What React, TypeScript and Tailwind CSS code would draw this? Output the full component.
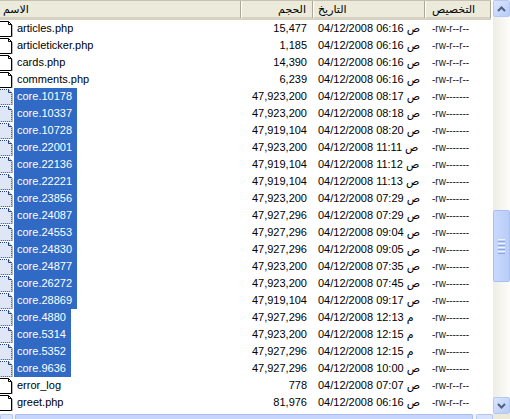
import React from "react";

type Row = { name: string; size: string; time: string; ampm: string; perm: string; sel?: boolean };

const rows: Row[] = [
  { name: "articles.php", size: "15,477", time: "06:16", ampm: "ص", perm: "-rw-r--r--" },
  { name: "articleticker.php", size: "1,185", time: "06:16", ampm: "ص", perm: "-rw-r--r--" },
  { name: "cards.php", size: "14,390", time: "06:16", ampm: "ص", perm: "-rw-r--r--" },
  { name: "comments.php", size: "6,239", time: "06:16", ampm: "ص", perm: "-rw-r--r--" },
  { name: "core.10178", size: "47,923,200", time: "08:17", ampm: "ص", perm: "-rw-------", sel: true },
  { name: "core.10337", size: "47,923,200", time: "08:18", ampm: "ص", perm: "-rw-------", sel: true },
  { name: "core.10728", size: "47,919,104", time: "08:20", ampm: "ص", perm: "-rw-------", sel: true },
  { name: "core.22001", size: "47,923,200", time: "11:11", ampm: "ص", perm: "-rw-------", sel: true },
  { name: "core.22136", size: "47,919,104", time: "11:12", ampm: "ص", perm: "-rw-------", sel: true },
  { name: "core.22221", size: "47,919,104", time: "11:13", ampm: "ص", perm: "-rw-------", sel: true },
  { name: "core.23856", size: "47,923,200", time: "07:29", ampm: "ص", perm: "-rw-------", sel: true },
  { name: "core.24087", size: "47,927,296", time: "07:29", ampm: "ص", perm: "-rw-------", sel: true },
  { name: "core.24553", size: "47,927,296", time: "09:04", ampm: "ص", perm: "-rw-------", sel: true },
  { name: "core.24830", size: "47,927,296", time: "09:05", ampm: "ص", perm: "-rw-------", sel: true },
  { name: "core.24877", size: "47,923,200", time: "07:35", ampm: "ص", perm: "-rw-------", sel: true },
  { name: "core.26272", size: "47,923,200", time: "07:45", ampm: "ص", perm: "-rw-------", sel: true },
  { name: "core.28869", size: "47,919,104", time: "09:17", ampm: "ص", perm: "-rw-------", sel: true },
  { name: "core.4880", size: "47,927,296", time: "12:13", ampm: "م", perm: "-rw-------", sel: true },
  { name: "core.5314", size: "47,923,200", time: "12:15", ampm: "م", perm: "-rw-------", sel: true },
  { name: "core.5352", size: "47,927,296", time: "12:15", ampm: "م", perm: "-rw-------", sel: true },
  { name: "core.9636", size: "47,927,296", time: "10:00", ampm: "ص", perm: "-rw-------", sel: true },
  { name: "error_log", size: "778", time: "07:07", ampm: "ص", perm: "-rw-r--r--" },
  { name: "greet.php", size: "81,976", time: "06:16", ampm: "ص", perm: "-rw-r--r--" },
];

function FileIcon({ sel }: { sel?: boolean }) {
  return (
    <svg width="13" height="16" viewBox="0 0 13 16" className="shrink-0">
      <path
        d="M-2 0.5 H8.5 L11.5 3.5 V15.5 H-2 Z"
        fill={sel ? "#dfe7f7" : "#ffffff"}
        stroke={sel ? "#1c3f8f" : "#000000"}
        strokeWidth="1"
        strokeDasharray={sel ? "1 1" : undefined}
      />
      <path d="M8.5 0.5 V3.5 H11.5" fill="none" stroke={sel ? "#1c3f8f" : "#000000"} strokeWidth="1" />
      <path d="M12.5 4 V16" stroke="#b8b8b8" strokeWidth="1" />
    </svg>
  );
}

function Arrow({ up }: { up?: boolean }) {
  return (
    <svg width="9" height="6" viewBox="0 0 9 6">
      <path
        d={up ? "M1 5 L4.5 1.5 L8 5" : "M1 1 L4.5 4.5 L8 1"}
        fill="none"
        stroke="#4d6185"
        strokeWidth="2"
      />
    </svg>
  );
}

export default function App() {
  const font = { fontFamily: '"Liberation Sans", "DejaVu Sans", Arial, sans-serif' };
  return (
    <div className="w-[510px] h-[419px] bg-white overflow-hidden flex flex-col text-[11px] text-black" style={font}>
      <div className="flex flex-1 min-h-0">
        <div className="w-[493px] flex flex-col">
          {/* header */}
          <div className="grid grid-cols-[241px_72px_112px_66px] h-[20px] bg-[#ebeadb] border-t border-[#c5c2b2] border-b-[3px] border-b-[#d6d2c2] w-[491px]">
            <div className="flex items-center pl-[3px] border-r border-[#aca899]" dir="rtl">
              <span className="mr-auto">الاسم</span>
            </div>
            <div className="flex items-center justify-end pr-[6px] border-r border-[#aca899] border-l border-l-white">
              <span dir="rtl">الحجم</span>
            </div>
            <div className="flex items-center pl-[4px] border-r border-[#aca899] border-l border-l-white">
              <span dir="rtl">التاريخ</span>
            </div>
            <div className="flex items-center pl-[6px] border-r border-[#aca899] border-l border-l-white">
              <span dir="rtl">التخصيص</span>
            </div>
          </div>
          {/* rows */}
          <div className="flex flex-col">
            {rows.map((r) => (
              <div key={r.name} className="grid grid-cols-[241px_72px_112px_66px] h-[17px] leading-[17px]">
                <div className="flex items-center">
                  <FileIcon sel={r.sel} />
                  <span
                    className={
                      r.sel
                        ? "ml-[1px] h-[17px] pl-[3px] pr-[5px] bg-[#316ac5] text-white whitespace-nowrap"
                        : "ml-[1px] h-[17px] pl-[3px] pr-[5px] whitespace-nowrap"
                    }
                  >
                    {r.name}
                  </span>
                </div>
                <div className="text-right pr-[6px] whitespace-nowrap">{r.size}</div>
                <div className="pl-[5px] whitespace-nowrap" dir="ltr">
                  <span>04/12/2008 {r.time} </span>
                  <span style={{ fontFamily: '"DejaVu Sans", sans-serif' }} className="text-[11px]">{r.ampm}</span>
                </div>
                <div className="pl-[7px] whitespace-nowrap text-[10px] text-[#222]">{r.perm}</div>
              </div>
            ))}
          </div>
        </div>
        {/* vertical scrollbar */}
        <div className="w-[17px] flex flex-col bg-gradient-to-r from-[#eeede5] to-[#fdfdfa]">
          <div className="h-[17px] rounded-[2px] border border-[#b4c8f6] bg-gradient-to-br from-[#dce6fd] to-[#b7cbf7] flex items-center justify-center">
            <Arrow up />
          </div>
          <div className="h-[193px]" />
          <div className="h-[72px] rounded-[2px] border border-[#a9bff2] bg-gradient-to-r from-[#c9d8fd] to-[#b9cdf9] flex flex-col items-center justify-center gap-[1px]">
            <div className="w-[7px] h-[1px] bg-[#eef3fe]" />
            <div className="w-[7px] h-[1px] bg-[#8ca5e5]" />
            <div className="w-[7px] h-[1px] bg-[#eef3fe]" />
            <div className="w-[7px] h-[1px] bg-[#8ca5e5]" />
            <div className="w-[7px] h-[1px] bg-[#eef3fe]" />
            <div className="w-[7px] h-[1px] bg-[#8ca5e5]" />
            <div className="w-[7px] h-[1px] bg-[#eef3fe]" />
            <div className="w-[7px] h-[1px] bg-[#8ca5e5]" />
          </div>
          <div className="flex-1" />
          <div className="h-[17px] rounded-[2px] border border-[#b4c8f6] bg-gradient-to-br from-[#dce6fd] to-[#b7cbf7] flex items-center justify-center">
            <Arrow />
          </div>
        </div>
      </div>
      {/* horizontal scrollbar (cut off) */}
      <div className="h-[5px] flex bg-[#f3f2ec]">
        <div className="w-[13px] rounded-t-[2px] border border-b-0 border-[#b4c8f6] bg-[#d7e2fc]" />
        <div className="w-[2px]" />
        <div className="w-[458px] rounded-t-[2px] border border-b-0 border-[#a9bff2] bg-[#c6d5fb]" />
        <div className="w-[3px]" />
        <div className="w-[17px] rounded-t-[2px] border border-b-0 border-[#b4c8f6] bg-[#d7e2fc]" />
        <div className="flex-1 bg-[#ece9d8]" />
      </div>
    </div>
  );
}
